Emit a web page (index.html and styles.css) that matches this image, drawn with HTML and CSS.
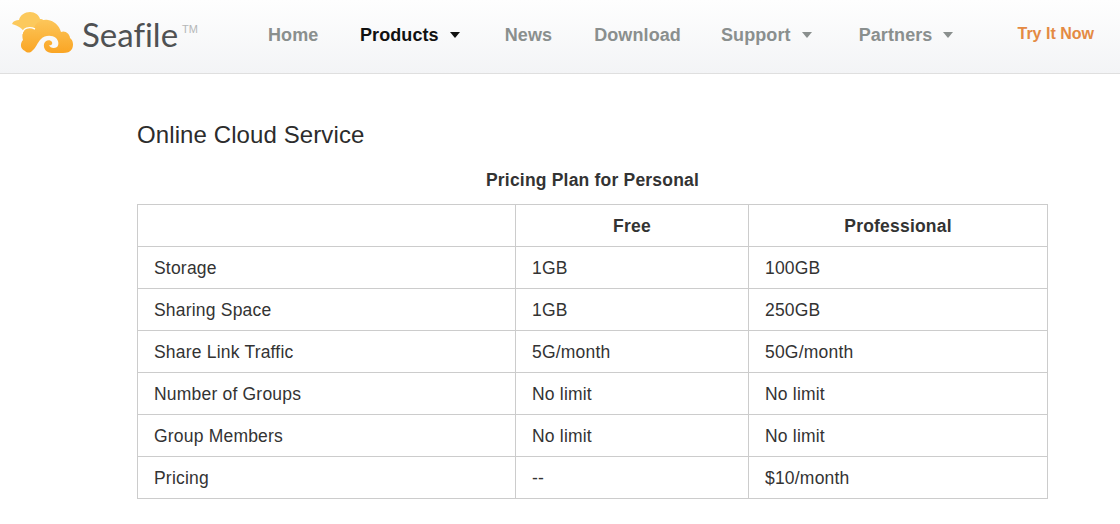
FILE: index.html
```html
<!DOCTYPE html>
<html lang="en">
<head>
<meta charset="utf-8">
<title>Seafile Pricing</title>
<link rel="stylesheet" href="styles.css">
</head>
<body>
<header class="topbar">
  <a class="brand" href="#">
    <svg class="brand-icon" width="70" height="50" viewBox="0 0 70 50" aria-hidden="true">
      <defs>
        <linearGradient id="cloud" x1="0" y1="0" x2="0" y2="1">
          <stop offset="0" stop-color="#fcc65a"/>
          <stop offset="1" stop-color="#faa524"/>
        </linearGradient>
      </defs>
      <path fill="#fcc95c" d="M6 16C7 13 10 12 13 12C14 7 19 4 24 4C29 4 33 7 34 11C37 11 39 13 39 16L28 24L19 26C17 20 12 18 6 16Z"/>
      <path fill="url(#cloud)" d="M19 43C14 41 14 35 17 32C16 28 16 24 19 21C21 19 25 19 28 20C30 14 36 11 42 12C48 13 53 17 55 24C59 22 64 26 64 30C67 32 68 37 66 41C64 44 61 45 57 45L46 45C41 45 37 41 38 36C39 32 44 31 46 34C47 36 45 38 43 37C44 40 48 41 51 39C53 37 53 33 50 30C46 27 39 27 35 31C31 35 30 40 26 43C24 45 21 45 19 43Z"/>
      <path fill="none" stroke="#fff" stroke-width="1.4" d="M16 26C17 20 23 18 29 21"/>
    </svg>
    <span class="brand-name">Seafile</span><span class="brand-tm">TM</span>
  </a>
  <nav class="nav">
    <a class="nav-link link-home" href="#">Home</a>
    <a class="nav-link nav-active link-products" href="#">Products<span class="caret"></span></a>
    <a class="nav-link link-news" href="#">News</a>
    <a class="nav-link link-download" href="#">Download</a>
    <a class="nav-link link-support" href="#">Support<span class="caret"></span></a>
    <a class="nav-link link-partners" href="#">Partners<span class="caret"></span></a>
    <a class="nav-try" href="#">Try It Now</a>
  </nav>
</header>
<main class="content">
  <h1 class="title">Online Cloud Service</h1>
  <table class="plans">
    <caption class="plans-caption">Pricing Plan for Personal</caption>
    <colgroup><col class="col-a"><col class="col-b"><col class="col-c"></colgroup>
    <thead>
      <tr><th></th><th>Free</th><th>Professional</th></tr>
    </thead>
    <tbody>
      <tr><td>Storage</td><td>1GB</td><td>100GB</td></tr>
      <tr><td>Sharing Space</td><td>1GB</td><td>250GB</td></tr>
      <tr><td>Share Link Traffic</td><td>5G/month</td><td>50G/month</td></tr>
      <tr><td>Number of Groups</td><td>No limit</td><td>No limit</td></tr>
      <tr><td>Group Members</td><td>No limit</td><td>No limit</td></tr>
      <tr><td>Pricing</td><td>--</td><td>$10/month</td></tr>
    </tbody>
  </table>
</main>
</body>
</html>
```
FILE: styles.css
```css
* { box-sizing: border-box; }
html, body { margin: 0; padding: 0; }
body {
  background: #fff;
  color: #333;
  font-family: "Liberation Sans", Arial, sans-serif;
  height: 524px;
  overflow: hidden;
}
a { text-decoration: none; }
.topbar {
  display: flex;
  align-items: flex-start;
  height: 74px;
  background: linear-gradient(#fefefe, #f3f4f6);
  border-bottom: 1px solid #dfdfdf;
}
.brand {
  display: flex;
  align-items: flex-start;
  width: 268px;
  flex: none;
  padding: 8px 0 0 6px;
}
.brand-icon { flex: none; filter: blur(0.4px); }
.brand-name {
  margin: 6px 0 0 6px;
  font-family: "Lato", sans-serif;
  font-size: 33px;
  font-variant-ligatures: none;
  line-height: 40px;
  color: #4f5153;
}
.brand-tm {
  margin: 14px 0 0 4px;
  font-size: 11px;
  line-height: 14px;
  color: #b5b7b8;
}
.nav {
  display: flex;
  align-items: flex-start;
  padding-top: 25px;
  font-size: 18px;
  font-weight: 700;
  line-height: 20px;
  letter-spacing: 0.1px;
}
.nav-link {
  display: flex;
  align-items: center;
  color: #8a8f8e;
  margin-right: 40px;
}
.link-home { margin-right: 41.5px; }
.link-news { margin-right: 42px; }
.link-products { margin-right: 45px; }
.link-support { margin-right: 47px; }
.link-partners { margin-right: 64px; }
.nav-active { color: #111; }
.caret {
  width: 0;
  height: 0;
  margin-left: 11px;
  border-style: solid;
  border-width: 6px 5.5px 0;
  border-color: currentColor transparent transparent;
}
.nav-try {
  color: #e48a43;
  font-size: 16px;
  margin-top: -1px;
  letter-spacing: 0;
}
.content { padding: 0 72px 0 137px; }
.title {
  margin: 47px 0 0;
  font-size: 24px;
  font-weight: 400;
  line-height: 28px;
  letter-spacing: 0.1px;
  color: #2c2c2c;
}
.plans {
  width: 910px;
  table-layout: fixed;
  border-collapse: collapse;
  font-size: 17.5px;
  letter-spacing: 0.2px;
}
.plans-caption {
  padding: 21px 0 14px;
  font-weight: 700;
  line-height: 20px;
  color: #333;
}
.col-a { width: 378px; }
.col-b { width: 233px; }
.col-c { width: 299px; }
.plans th, .plans td {
  height: 42px;
  padding: 1px 16px 0;
  border: 1px solid #ccc;
  text-align: left;
}
.plans th { text-align: center; font-weight: 700; }
```
